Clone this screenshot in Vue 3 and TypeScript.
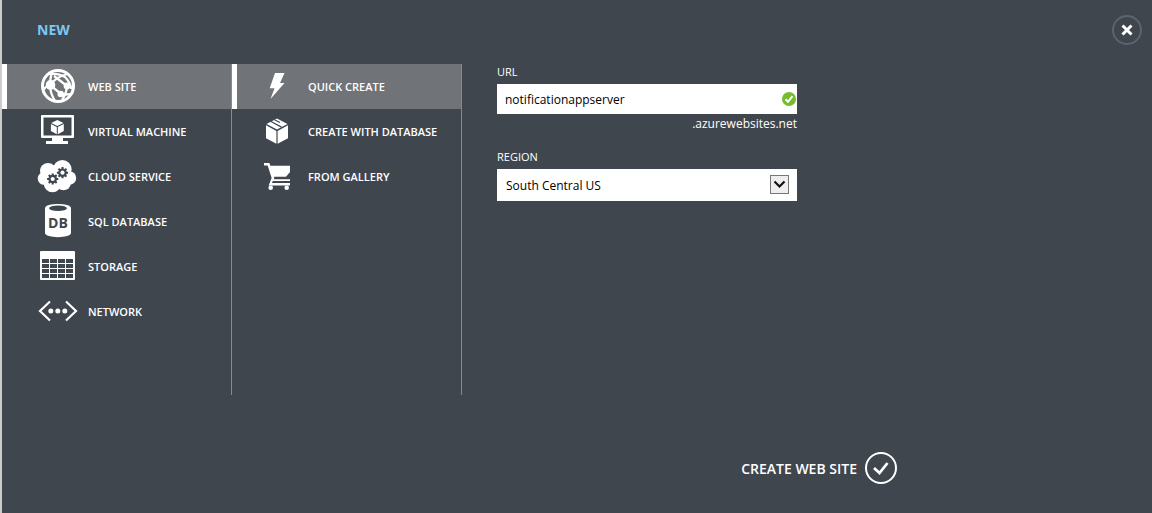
<script setup lang="ts">
import { ref } from 'vue'

interface Entry {
  id: string
  label: string
}

const services: Entry[] = [
  { id: 'web', label: 'WEB SITE' },
  { id: 'vm', label: 'VIRTUAL MACHINE' },
  { id: 'cloud', label: 'CLOUD SERVICE' },
  { id: 'sql', label: 'SQL DATABASE' },
  { id: 'storage', label: 'STORAGE' },
  { id: 'network', label: 'NETWORK' },
]

const methods: Entry[] = [
  { id: 'quick', label: 'QUICK CREATE' },
  { id: 'database', label: 'CREATE WITH DATABASE' },
  { id: 'gallery', label: 'FROM GALLERY' },
]

const service = ref('web')
const method = ref('quick')
const url = ref('notificationappserver')
const region = ref('South Central US')

const cellColumns = [10, 18, 26, 34]
const cellRows = [15, 20, 25, 30]
const gearTeeth = [0, 45, 90, 135]
const gears = [
  { x: 20.7, y: 25 },
  { x: 30.5, y: 18.7 },
]
</script>

<template>
  <main class="panel">
    <header class="top">
      <h1 class="title">NEW</h1>
      <button class="close" type="button" aria-label="Close">
        <svg width="12" height="12" viewBox="0 0 12 12">
          <path d="M1.500 1.500 10.500 10.500M10.500 1.500 1.500 10.500" stroke="#fff" stroke-width="3" />
        </svg>
      </button>
    </header>

    <div class="columns">
      <nav class="list services" aria-label="Services">
        <button
          v-for="item in services"
          :key="item.id"
          type="button"
          class="row"
          :class="{ selected: item.id === service }"
          @click="service = item.id"
        >
          <svg class="icon" viewBox="0 0 48 45" fill="#fff" aria-hidden="true">
            <g v-if="item.id === 'web'">
              <circle cx="26" cy="22" r="15.500" fill="none" stroke="#fff" stroke-width="3" />
              <g fill="none" stroke="#fff" stroke-width="2.300">
                <path d="M18 21Q24 13 35 10M18 21 29 30Q34 31 38 30" />
                <path d="M17 10Q27 9 33 13Q38 18 39.500 25M20 8Q18 15 18 21Q18 29 23 37M22 12 35 22" />
                <path d="M35 22Q35 28 30 36M11 26Q14 22 18 21" />
              </g>
              <ellipse cx="18.500" cy="21" rx="4.800" ry="5" />
              <circle cx="35" cy="22" r="3.400" />
              <circle cx="28.700" cy="30" r="3.200" />
            </g>
            <g v-else-if="item.id === 'vm'">
              <path fill-rule="evenodd" d="M10 6H41Q42 6 42 7V28Q42 29 41 29H10Q9 29 9 28V7Q9 6 10 6ZM11.500 8.500V26.500H39.500V8.500Z" />
              <path d="M20 29H31V32H36V35H14V32H20Z" />
              <path d="M25.300 11 31.500 14 25.300 17 19.200 14ZM18.900 15 24.800 18V25.300L18.900 22ZM31.800 15V22L25.800 25.300V18Z" />
            </g>
            <g v-else-if="item.id === 'cloud'">
              <circle cx="30.300" cy="15.300" r="9.300" />
              <circle cx="16" cy="17" r="8" />
              <circle cx="12" cy="24.500" r="6.300" />
              <circle cx="20.500" cy="29.500" r="8.700" />
              <circle cx="37.500" cy="24" r="6.700" />
              <circle cx="31.500" cy="29" r="7.300" />
              <g
                v-for="gear in gears"
                :key="gear.x"
                :transform="`translate(${gear.x} ${gear.y})`"
                fill="none"
                stroke="#3f464e"
              >
                <circle r="3.200" stroke-width="2.200" />
                <path
                  v-for="angle in gearTeeth"
                  :key="angle"
                  d="M0-5.600V-3.500M0 3.500V5.600"
                  stroke-width="2"
                  :transform="`rotate(${angle})`"
                />
              </g>
            </g>
            <g v-else-if="item.id === 'sql'">
              <path d="M13 9C13 3.500 39 3.500 39 9V34C39 39.500 13 39.500 13 34Z" />
              <ellipse cx="26" cy="9.300" rx="9" ry="2.800" fill="#3f464e" />
              <text x="26" y="29" text-anchor="middle" class="db">DB</text>
            </g>
            <g v-else-if="item.id === 'storage'">
              <rect x="8" y="7" width="35" height="29" rx="1" />
              <template v-for="y in cellRows" :key="y">
                <rect v-for="x in cellColumns" :key="x" :x="x" :y="y" width="7" height="4" fill="#3f464e" />
              </template>
            </g>
            <g v-else>
              <path d="M18 12.500 8 22 18 31.500M34 12.500 44 22 34 31.500" fill="none" stroke="#fff" stroke-width="2.200" />
              <circle cx="18.800" cy="22" r="2.500" />
              <circle cx="25.800" cy="22" r="2.500" />
              <circle cx="32.800" cy="22" r="2.500" />
            </g>
          </svg>
          <span>{{ item.label }}</span>
        </button>
      </nav>

      <nav class="list methods" aria-label="Creation methods">
        <button
          v-for="item in methods"
          :key="item.id"
          type="button"
          class="row"
          :class="{ selected: item.id === method }"
          @click="method = item.id"
        >
          <svg class="icon" viewBox="0 0 48 45" fill="#fff" aria-hidden="true">
            <path v-if="item.id === 'quick'" d="M23 9H32.500L28 19H32.500L18.500 35 22.500 24.300H17.700Z" />
            <g v-else-if="item.id === 'database'">
              <path d="M14 16.300 24.400 22V34.800L14 29.300ZM36 16.300V29.300L25.600 34.800V22Z" />
              <path d="M25 9.500 35.500 14.900 25 20.500 14.500 14.900Z" />
              <path d="M18.500 12.200 29.500 18.100M22.500 10.800 28 13.500" stroke="#3f464e" stroke-width="1.200" />
            </g>
            <g v-else>
              <path d="M18 11.700H38V18L34 22.700H21Z" />
              <path d="M12 10.200H16.500L21 24 18.500 30.200H38M21 26.800H38" fill="none" stroke="#fff" stroke-width="2.500" />
              <path d="M21 26.800H38V28.900H20Z" fill="#3f464e" />
              <path d="M21 25.500H38V27H20.400Z" />
              <circle cx="18.700" cy="33.800" r="2.300" />
              <circle cx="34.700" cy="33.800" r="2.300" />
            </g>
          </svg>
          <span>{{ item.label }}</span>
        </button>
      </nav>

      <form id="create-form" class="form" @submit.prevent>
        <label class="label" for="url">URL</label>
        <div class="field">
          <input id="url" v-model="url" class="text" type="text" spellcheck="false" />
          <svg class="valid" viewBox="0 0 14 14" aria-hidden="true">
            <circle cx="7" cy="7" r="7" fill="#76bc2d" />
            <path d="M3.500 7.200 6 9.800 10.500 4.200" fill="none" stroke="#fff" stroke-width="2" />
          </svg>
        </div>
        <p class="suffix">.azurewebsites.net</p>

        <label class="label" for="region">REGION</label>
        <div class="field">
          <select id="region" v-model="region" class="select">
            <option>South Central US</option>
          </select>
          <span class="arrow" aria-hidden="true">
            <svg width="13" height="9" viewBox="0 0 13 9">
              <path d="M1.500 1.500 6.500 6.500 11.500 1.500" fill="none" stroke="#111" stroke-width="2.200" />
            </svg>
          </span>
        </div>
      </form>
    </div>

    <footer class="footer">
      <button class="create" type="submit" form="create-form">
        <span>CREATE WEB SITE</span>
        <svg width="32" height="32" viewBox="0 0 32 32" fill="none" stroke="#fff" aria-hidden="true">
          <circle cx="16" cy="16" r="15" stroke-width="2" />
          <path d="M9 16 14.500 21 22.500 11" stroke-width="2.800" />
        </svg>
      </button>
    </footer>
  </main>
</template>

<style>
body {
  margin: 0;
  background: #3f464e;
}
</style>

<style scoped>
.panel {
  box-sizing: border-box;
  min-height: 100vh;
  border-left: 2px solid #ccc;
  background: #3f464e;
  color: #fff;
  font-family: "Open Sans", "Noto Sans", sans-serif;
  font-size: 12px;
  font-variant-ligatures: none;
}

button,
input,
select {
  box-sizing: border-box;
  margin: 0;
  border: 0;
  font: inherit;
  font-variant-ligatures: none;
}

button {
  padding: 0;
  background: none;
  color: inherit;
  cursor: pointer;
}

.top {
  display: flex;
  align-items: center;
  justify-content: space-between;
  height: 30px;
  padding: 15px 10px 19px 35px;
}

.title {
  margin: 0;
  color: #7cc8f4;
  font-size: 14px;
  font-weight: 700;
  line-height: 18px;
}

.close {
  display: flex;
  align-items: center;
  justify-content: center;
  width: 30px;
  height: 30px;
  border: 2px solid #5d646d;
  border-radius: 50%;
}

.columns {
  display: grid;
  grid-template-columns: 230px 230px 1fr;
  min-height: 331px;
}

.list {
  border-right: 1px solid #85898e;
}

.row {
  display: flex;
  align-items: center;
  gap: 8px;
  width: 100%;
  height: 45px;
  border-left: 5px solid transparent;
  font-size: 11px;
  font-weight: 600;
  white-space: nowrap;
}

.services .row {
  padding-left: 25px;
}

.methods .row {
  padding-left: 15px;
}

.selected {
  border-left-color: #fff;
  background: #707377;
}

.icon {
  flex: none;
  width: 48px;
  height: 45px;
}

.db {
  fill: #3f464e;
  font-size: 14px;
  font-weight: 700;
}

.form {
  max-width: 300px;
  padding-left: 35px;
}

.label {
  display: block;
  height: 20px;
  font-size: 11px;
  line-height: 16px;
}

.field {
  position: relative;
}

.text,
.select {
  display: block;
  width: 100%;
  border-radius: 0;
  background: #fff;
  color: #000;
}

.text {
  height: 30px;
  padding: 0 24px 0 8px;
}

.select {
  height: 32px;
  padding: 0 32px 0 9px;
  appearance: none;
}

.valid {
  position: absolute;
  top: 8px;
  right: 1px;
  width: 14px;
  height: 14px;
}

.suffix {
  margin: 0 0 15px;
  line-height: 20px;
  text-align: right;
}

.arrow {
  position: absolute;
  top: 6px;
  right: 8px;
  display: flex;
  align-items: center;
  justify-content: center;
  box-sizing: border-box;
  width: 19px;
  height: 19px;
  border: 1px solid #777;
  background: #eee;
  pointer-events: none;
}

.footer {
  display: flex;
  justify-content: flex-end;
  max-width: 895px;
  padding: 57px 0 29px;
}

.create {
  display: flex;
  align-items: center;
  gap: 8px;
  font-size: 14px;
  font-weight: 600;
}
</style>
